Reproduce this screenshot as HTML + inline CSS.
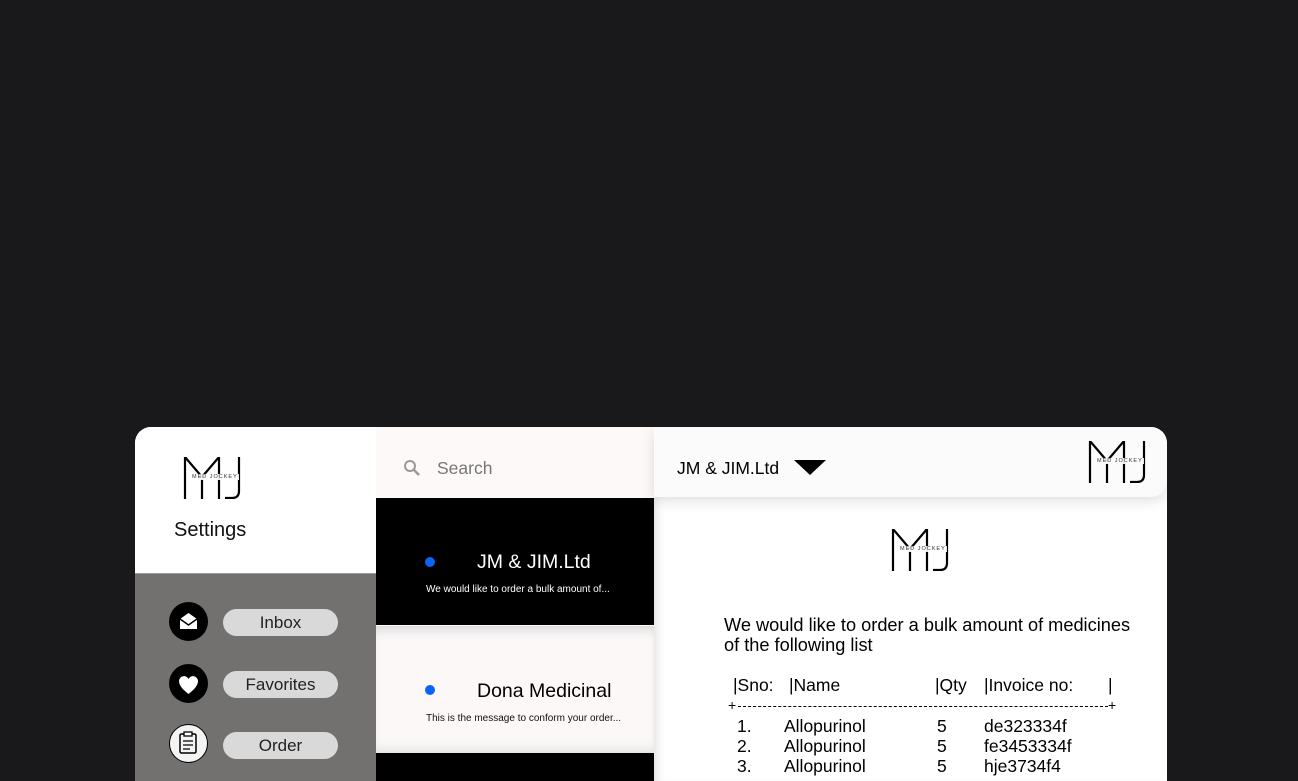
<!DOCTYPE html>
<html><head><style>
*{margin:0;padding:0;box-sizing:border-box}
body{width:1298px;height:781px;background:#19191b;font-family:"Liberation Sans",sans-serif;position:relative;overflow:hidden}
.abs{position:absolute}
.logo{position:absolute;width:58px;height:42px}
.logo .t{position:absolute;left:8px;top:17px;font-size:5.5px;letter-spacing:1px;color:#333;background:rgba(255,255,255,.9);line-height:6px;padding:0 1px}
.pill{position:absolute;left:223px;width:115px;height:27px;border-radius:14px;background:#d9d9d9;font-size:17px;color:#222;text-align:center;line-height:27px}
.ic{position:absolute;left:169px;width:39px;height:39px;border-radius:50%;background:#000}
</style></head><body>
<div class="abs" style="left:135px;top:427px;width:1032px;height:354px;border-radius:16px 16px 0 0;overflow:hidden;background:#fff">
 <div class="abs" style="left:0;top:0;width:241px;height:146px;background:#fff"></div>
 <div class="abs" style="left:0;top:146px;width:241px;height:208px;background:#737170;border-top:1px solid #999"></div>
 <div class="abs" style="left:241px;top:0;width:278px;height:71px;background:#fcf9f8"></div>
 <div class="abs" style="left:241px;top:71px;width:278px;height:127px;background:#000"></div>
 <div class="abs" style="left:241px;top:199px;width:278px;height:127px;background:#fbf8f7;box-shadow:inset 0 10px 12px -8px #ccc,inset 0 -10px 12px -8px #ddd"></div>
 <div class="abs" style="left:241px;top:326px;width:278px;height:28px;background:#000"></div>
 <div class="abs" style="left:519px;top:0;width:513px;height:70px;background:#fcfbfb;border-radius:0 16px 16px 0;box-shadow:0 4px 14px rgba(0,0,0,.12);z-index:2"></div>
 <div class="abs" style="left:519px;top:70px;width:513px;height:284px;background:#fff;box-shadow:inset 8px 0 10px -6px #ddd"></div>
</div>

<div class="logo" style="left:183px;top:457px"><svg width="58" height="42" viewBox="0 0 58 42"><g stroke="#000" stroke-width="2.2" fill="none"><path d="M2 0v42M2 0l17 20M36 0L19 20M36 0v42M19 22v20M56 0v34q0 7-7 7h-7"/></g></svg><span class="t">MED JOCKEY</span></div>
<div class="abs" style="left:174px;top:519px;font-size:20px;color:#111">Settings</div>
<svg class="abs" style="left:403px;top:459px" width="18" height="18" viewBox="0 0 18 18"><circle cx="7" cy="7" r="5" fill="none" stroke="#999" stroke-width="2"/><path d="M11 11l5 5" stroke="#999" stroke-width="2.5"/></svg>
<div class="abs" style="left:437px;top:458px;font-size:17.5px;color:#777">Search</div>
<div class="abs" style="left:425px;top:557px;width:10px;height:10px;border-radius:50%;background:#0a64f5"></div>
<div class="abs" style="left:477px;top:551px;font-size:19.5px;color:#fff">JM &amp; JIM.Ltd</div>
<div class="abs" style="left:426px;top:584px;font-size:10px;color:#fff">We would like to order a bulk amount of...</div>
<div class="abs" style="left:425px;top:685px;width:10px;height:10px;border-radius:50%;background:#0a64f5"></div>
<div class="abs" style="left:477px;top:680px;font-size:19.5px;color:#000">Dona Medicinal</div>
<div class="abs" style="left:426px;top:713px;font-size:10px;color:#111">This is the message to conform your order...</div>
<div class="ic" style="top:602px"><svg width="39" height="39" viewBox="0 0 39 39"><path d="M11 17l8.5-6 8.5 6v10H11z" fill="#fff"/><path d="M11 17l8.5 6 8.5-6" fill="none" stroke="#000" stroke-width="1.5"/></svg></div>
<div class="ic" style="top:664px"><svg width="39" height="39" viewBox="0 0 39 39"><path d="M19.5 30C13 25 10 21 10 17a5 5 0 0 1 9.5-2 5 5 0 0 1 9.5 2c0 4-3 8-9.5 13z" fill="#fff"/></svg></div>
<div class="ic" style="top:724px;background:#f4f4f4;border:1.5px solid #000"><svg width="36" height="36" viewBox="0 0 36 36"><rect x="10" y="9" width="16" height="19" rx="1.5" fill="none" stroke="#000" stroke-width="1.5"/><rect x="14" y="7" width="8" height="4" fill="#fff" stroke="#000" stroke-width="1.3"/><path d="M13 16h10M13 20h10M13 24h7" stroke="#000" stroke-width="1.3"/></svg></div>
<div class="pill" style="top:609px">Inbox</div>
<div class="pill" style="top:671px">Favorites</div>
<div class="pill" style="top:732px">Order</div>
<div class="abs" style="left:677px;top:458px;font-size:17.5px;color:#000;z-index:3">JM &amp; JIM.Ltd</div>
<svg class="abs" style="left:794px;top:460px;z-index:3" width="32" height="16"><path d="M0 0h32L16 15z" fill="#000"/></svg>
<div class="logo" style="left:1088px;top:441px;z-index:3"><svg width="58" height="42" viewBox="0 0 58 42"><g stroke="#000" stroke-width="2.2" fill="none"><path d="M2 0v42M2 0l17 20M36 0L19 20M36 0v42M19 22v20M56 0v34q0 7-7 7h-7"/></g></svg><span class="t">MED JOCKEY</span></div>
<div class="logo" style="left:891px;top:529px"><svg width="58" height="42" viewBox="0 0 58 42"><g stroke="#000" stroke-width="2.2" fill="none"><path d="M2 0v42M2 0l17 20M36 0L19 20M36 0v42M19 22v20M56 0v34q0 7-7 7h-7"/></g></svg><span class="t">MED JOCKEY</span></div>
<div class="abs" style="left:724px;top:615px;font-size:18.2px;line-height:20px;color:#000">We would like to order a bulk amount of medicines<br>of the following list</div>
<div class="abs" style="left:733px;top:675px;font-size:17.5px">|Sno:</div>
<div class="abs" style="left:789px;top:675px;font-size:17.5px">|Name</div>
<div class="abs" style="left:935px;top:675px;font-size:17.5px">|Qty</div>
<div class="abs" style="left:984px;top:675px;font-size:17.5px">|Invoice no:</div>
<div class="abs" style="left:1108px;top:675px;font-size:17.5px">|</div>
<div class="abs" style="left:728px;top:697px;font-size:14px;white-space:nowrap">+</div>
<div class="abs" style="left:738px;top:706px;width:370px;border-top:1.5px dashed #000"></div>
<div class="abs" style="left:1108px;top:697px;font-size:14px;white-space:nowrap">+</div>
<div class="abs" style="left:737px;top:716px;font-size:17.5px;line-height:20px">1.<br>2.<br>3.</div>
<div class="abs" style="left:784px;top:716px;font-size:17.5px;line-height:20px">Allopurinol<br>Allopurinol<br>Allopurinol</div>
<div class="abs" style="left:937px;top:716px;font-size:17.5px;line-height:20px">5<br>5<br>5</div>
<div class="abs" style="left:984px;top:716px;font-size:17.5px;line-height:20px">de323334f<br>fe3453334f<br>hje3734f4</div>
</body></html>
